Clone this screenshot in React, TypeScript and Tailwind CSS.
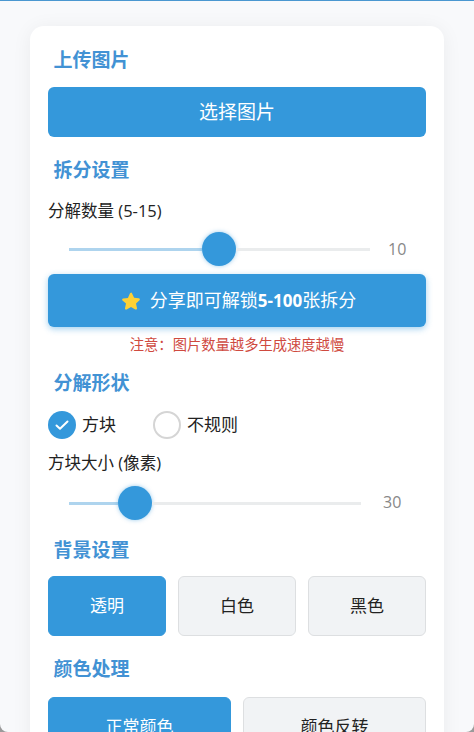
const font = "font-['Segoe_UI','Open_Sans','Noto_Sans_CJK_SC',sans-serif]"

function Heading({ children, className = '' }: { children: string; className?: string }) {
  return <h3 className={`pl-[5.5px] text-[19px] leading-[24px] font-bold text-[#4292d4] ${className}`}>{children}</h3>
}

function Slider({ fill, rest, value, gap }: { fill: string; rest: string; value: number; gap: string }) {
  return (
    <div className="flex items-center pl-[21px]">
      <div className={`h-[3px] bg-[#aed4ee] ${fill}`} />
      <div className="size-[34px] shrink-0 rounded-full bg-[#3498db] shadow-[0_0_4px_rgba(52,152,219,0.5)]" />
      <div className={`h-[3px] bg-[#eaeced] ${rest}`} />
      <span className={`text-[16px] leading-[24px] text-[#888888] ${gap}`}>{value}</span>
    </div>
  )
}

function Star() {
  return (
    <svg viewBox="0 0 20 20" className="size-[20px] shrink-0">
      <path
        d="M10 1.6c.5 0 .9.3 1.1.8l2 4.4 4.7.5c1 .1 1.4 1.3.7 2l-3.5 3.2 1 4.7c.2 1-.8 1.7-1.7 1.2L10 16.100l-4.300 2.400c-.9.5-1.900-.2-1.700-1.200l1-4.700-3.500-3.200c-.7-.7-.3-1.900.7-2l4.700-.5 2-4.400c.2-.5.600-.8 1.100-.8z"
        fill="#fdd135"
      />
    </svg>
  )
}

function Choice({ label, active, className = '' }: { label: string; active?: boolean; className?: string }) {
  return (
    <button
      className={`flex items-center justify-center rounded-[6px] border text-[17px] ${
        active ? 'border-[#3498db] bg-[#3498db] text-white' : 'border-[#dddfe1] bg-[#f1f3f5] text-[#222222]'
      } ${className}`}
    >
      {label}
    </button>
  )
}

export default function App() {
  return (
    <div className={`h-[732px] overflow-hidden bg-[#9a9a9a] ${font}`}>
      <div className="h-full overflow-hidden rounded-b-[8px] border-t border-[#4a97d0] bg-[#f8f9fb] px-[30px] pt-[25px]">
        <div className="h-[800px] rounded-[14px] bg-white px-[18px] pt-[22px] shadow-[0_2px_20px_rgba(0,0,0,0.06)]">
          <Heading>上传图片</Heading>
          <button className="mt-[15px] h-[50px] w-full rounded-[6px] bg-[#3498db] text-[19px] text-white">选择图片</button>

          <Heading className="mt-[21px]">拆分设置</Heading>
          <p className="mt-[17px] text-[16.5px] leading-[24px] text-[#222222]">分解数量 (5-15)</p>
          <div className="mt-[9px]">
            <Slider fill="w-[133px]" rest="w-[134px]" value={10} gap="ml-[18px]" />
          </div>
          <button className="mt-[8px] flex h-[53px] w-full items-center justify-center gap-[9px] rounded-[6px] bg-[#3498db] pl-[3px] text-[18px] text-white shadow-[0_2px_6px_rgba(52,152,219,0.45)]">
            <Star />
            <span>
              分享即可解锁<b className="text-[17px]">5-100</b>张拆分
            </span>
          </button>
          <p className="mt-[8px] text-center text-[14.3px] leading-[20px] text-[#cf4a3f]">{'注意\uFF1A图片数量越多生成速度越慢'}</p>

          <Heading className="mt-[16px]">分解形状</Heading>
          <div className="mt-[16px] flex items-center">
            <span className="flex size-[28px] items-center justify-center rounded-full bg-[#3498db]">
              <svg viewBox="0 0 16 16" className="size-[16px]" fill="none" stroke="white" strokeWidth="2" strokeLinecap="round" strokeLinejoin="round">
                <path d="M2.500 8.500l3.500 3.300 7.500-7.300" />
              </svg>
            </span>
            <span className="ml-[6px] text-[17px] leading-[28px] text-[#222222]">方块</span>
            <span className="ml-[37px] size-[28px] rounded-full border-2 border-[#d5d5d5] bg-white" />
            <span className="ml-[6px] text-[17px] leading-[28px] text-[#222222]">不规则</span>
          </div>
          <p className="mt-[12px] text-[16.5px] leading-[24px] text-[#222222]">方块大小 (像素)</p>
          <div className="mt-[11px]">
            <Slider fill="w-[49px]" rest="w-[209px]" value={30} gap="ml-[22px] -mt-[2px]" />
          </div>

          <Heading className="mt-[18px]">背景设置</Heading>
          <div className="mt-[14px] grid h-[60px] grid-cols-3 gap-[12px]">
            <Choice label="透明" active />
            <Choice label="白色" />
            <Choice label="黑色" />
          </div>

          <Heading className="mt-[21px]">颜色处理</Heading>
          <div className="mt-[16px] grid h-[60px] grid-cols-2 gap-[12px]">
            <Choice label="正常颜色" active />
            <Choice label="颜色反转" />
          </div>
        </div>
      </div>
    </div>
  )
}
